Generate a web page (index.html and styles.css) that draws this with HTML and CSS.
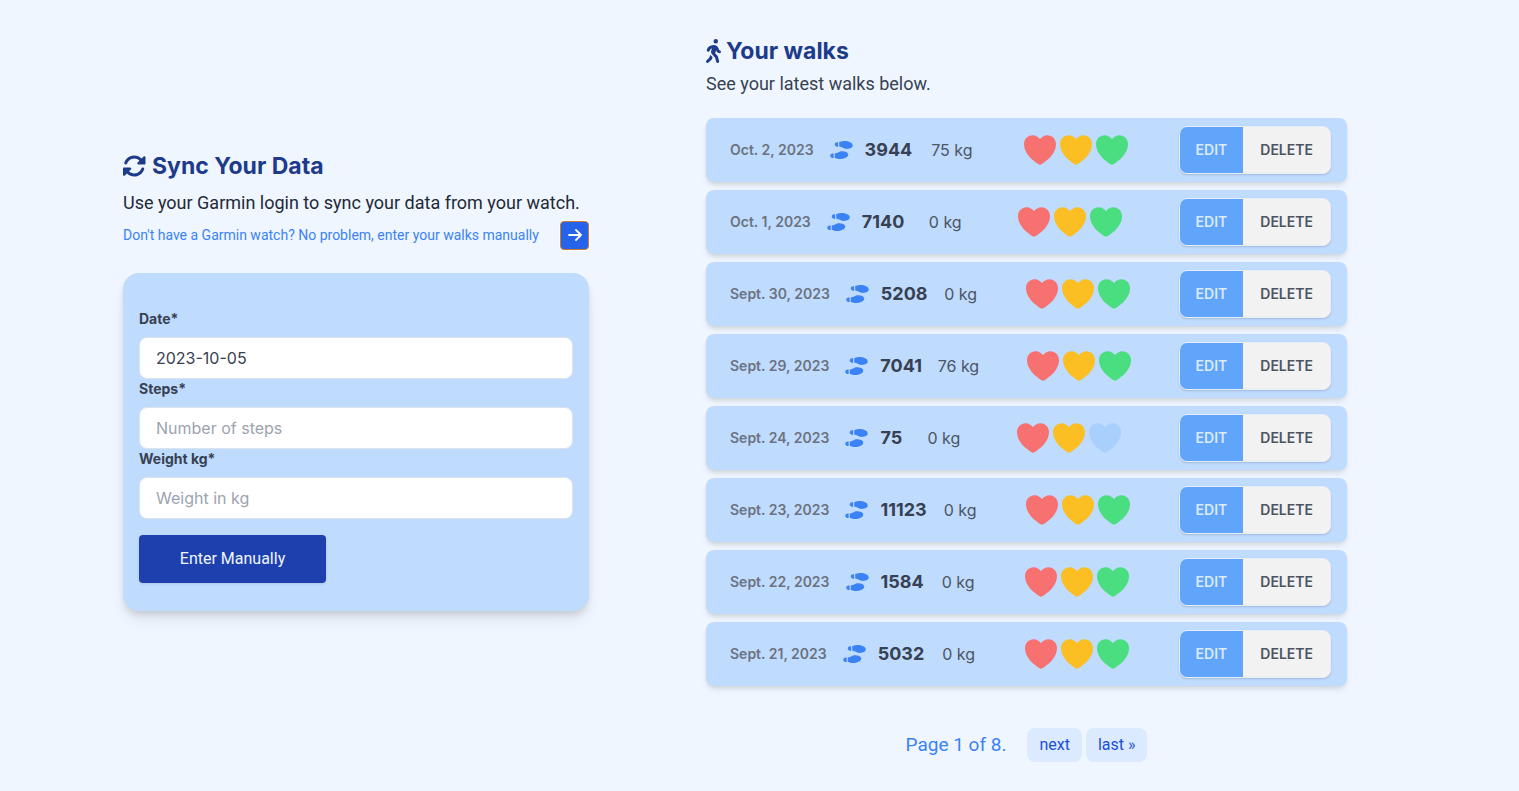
FILE: index.html
```html
<!DOCTYPE html>
<html lang="en">
<head>
<meta charset="utf-8">
<meta name="viewport" content="width=device-width, initial-scale=1">
<title>Your walks</title>
<link rel="stylesheet" href="styles.css">
</head>
<body>
<svg class="sprite" aria-hidden="true">
  <symbol id="shoes" viewBox="0 0 640 512"><path d="M416 0C352.3 0 256 32 256 32V160c48 0 76 16 104 32s56 32 104 32c56.4 0 176-16 176-96S512 0 416 0zM128 96c0 35.3 28.7 64 64 64h32V32H192c-35.3 0-64 28.7-64 64zM288 512c96 0 224-48 224-128s-119.6-96-176-96c-48 0-76 16-104 32s-56 32-104 32V480s96.3 32 160 32zM0 416c0 35.3 28.7 64 64 64H96V352H64c-35.3 0-64 28.7-64 64z"/></symbol>
  <symbol id="heart" viewBox="0 0 200 185"><path d="M100 184.606a15.384 15.384 0 0 1-8.653-2.678C53.565 156.28 37.205 138.695 28.182 127.7 8.952 104.264-.254 80.202.005 54.146.308 24.287 24.264 0 53.406 0c21.192 0 35.869 11.937 44.416 21.879a2.884 2.884 0 0 0 4.356 0C110.725 11.927 125.402 0 146.594 0c29.142 0 53.098 24.287 53.4 54.151.26 26.061-8.956 50.122-28.176 73.554-9.023 10.994-25.383 28.58-63.165 54.228a15.384 15.384 0 0 1-8.653 2.673Z"/></symbol>
</svg>
<main class="page">
  <section class="sync">
    <h1 class="title">
      <svg class="title-icon" viewBox="16 0 512 512" aria-hidden="true"><path d="M142.900 142.900c62.200-62.200 162.700-62.500 225.300-1L327 183c-6.900 6.900-8.900 17.200-5.200 26.200s12.500 14.800 22.200 14.800H472c13.300 0 24-10.700 24-24V72c0-9.700-5.800-18.500-14.800-22.200s-19.300-1.700-26.200 5.200L413.400 96.600c-87.600-86.500-228.700-86.200-315.800 1C73.200 122 55.600 150.700 44.800 181.400c-5.900 16.700 2.900 34.900 19.500 40.800s34.900-2.900 40.800-19.500c7.700-21.800 20.200-42.300 37.800-59.800zM16 312V440c0 9.700 5.800 18.500 14.800 22.200s19.300 1.700 26.200-5.200l41.600-41.600c87.600 86.500 228.700 86.200 315.800-1c24.400-24.400 42.100-53.100 52.900-83.700c5.900-16.700-2.900-34.900-19.500-40.800s-34.900 2.900-40.800 19.500c-7.700 21.800-20.200 42.300-37.800 59.800c-62.200 62.200-162.700 62.500-225.300 1L185 329c6.900-6.900 8.900-17.200 5.200-26.200s-12.500-14.800-22.200-14.800H40c-13.300 0-24 10.700-24 24z"/></svg>
      Sync Your Data
    </h1>
    <p class="lead">Use your Garmin login to sync your data from your watch.</p>
    <p class="switch">
      <span>Don't have a Garmin watch? No problem, enter your walks manually</span>
      <button class="switch-button" type="button" aria-label="Enter walks manually">
        <svg class="arrow" viewBox="0 0 14 14" aria-hidden="true"><path d="M1 7h12M8 2l5 5-5 5"/></svg>
      </button>
    </p>
    <form class="card">
      <label class="label" for="date">Date*</label>
      <input class="field" id="date" type="text" value="2023-10-05">
      <label class="label" for="steps">Steps*</label>
      <input class="field" id="steps" type="text" placeholder="Number of steps">
      <label class="label" for="weight">Weight kg*</label>
      <input class="field" id="weight" type="text" placeholder="Weight in kg">
      <button class="submit" type="submit">Enter Manually</button>
    </form>
  </section>

  <section class="walks">
    <h2 class="title">
      <svg class="title-icon walker" viewBox="0 0 320 512" aria-hidden="true"><path d="M160 48a48 48 0 1 1 96 0 48 48 0 1 1 -96 0zM126.500 199.300c-1 .4-1.900 .8-2.900 1.200l-8 3.500c-16.400 7.300-29 21.200-34.700 38.200l-2.600 7.800c-5.600 16.800-23.700 25.800-40.500 20.200s-25.800-23.700-20.200-40.500l2.600-7.800c11.400-34.100 36.600-61.900 69.400-76.500l8-3.500c20.800-9.200 43.300-14 66.100-14c44.600 0 84.800 26.800 101.900 67.900L281 232.700l21.400 10.700c15.800 7.900 22.200 27.100 14.300 42.900s-27.100 22.200-42.900 14.300L247 287.300c-10.300-5.200-18.400-13.800-22.800-24.500l-9.600-23-19.300 65.500 49.500 54c5.400 5.900 9.200 13 11.200 20.800l23 92.100c4.300 17.100-6.100 34.500-23.300 38.800s-34.500-6.100-38.800-23.300l-22-88.100-70.700-77.100c-14.800-16.100-20.300-38.600-14.700-59.700l16.900-63.500zM68.700 398l25-62.400c2.100 3 4.500 5.800 7 8.600l40.700 44.400-14.500 36.200c-2.400 6-6 11.500-10.600 16.100L54.600 502.600c-12.500 12.500-32.800 12.500-45.300 0s-12.500-32.800 0-45.300L68.700 398z"/></svg>
      Your walks
    </h2>
    <p class="intro">See your latest walks below.</p>
    <ul class="list">
      <li class="walk">
        <div class="summary"><time class="date">Oct. 2, 2023</time><svg class="shoes" aria-hidden="true"><use href="#shoes"/></svg><strong class="steps">3944</strong></div>
        <span class="weight">75 kg</span>
        <div class="hearts" role="img" aria-label="3 of 3 hearts"><svg class="heart red"><use href="#heart"/></svg><svg class="heart amber"><use href="#heart"/></svg><svg class="heart green"><use href="#heart"/></svg></div>
        <div class="actions"><button class="action edit" type="button">EDIT</button><button class="action" type="button">DELETE</button></div>
      </li>
      <li class="walk">
        <div class="summary"><time class="date">Oct. 1, 2023</time><svg class="shoes" aria-hidden="true"><use href="#shoes"/></svg><strong class="steps">7140</strong></div>
        <span class="weight">0 kg</span>
        <div class="hearts" role="img" aria-label="3 of 3 hearts"><svg class="heart red"><use href="#heart"/></svg><svg class="heart amber"><use href="#heart"/></svg><svg class="heart green"><use href="#heart"/></svg></div>
        <div class="actions"><button class="action edit" type="button">EDIT</button><button class="action" type="button">DELETE</button></div>
      </li>
      <li class="walk">
        <div class="summary"><time class="date">Sept. 30, 2023</time><svg class="shoes" aria-hidden="true"><use href="#shoes"/></svg><strong class="steps">5208</strong></div>
        <span class="weight">0 kg</span>
        <div class="hearts" role="img" aria-label="3 of 3 hearts"><svg class="heart red"><use href="#heart"/></svg><svg class="heart amber"><use href="#heart"/></svg><svg class="heart green"><use href="#heart"/></svg></div>
        <div class="actions"><button class="action edit" type="button">EDIT</button><button class="action" type="button">DELETE</button></div>
      </li>
      <li class="walk">
        <div class="summary"><time class="date">Sept. 29, 2023</time><svg class="shoes" aria-hidden="true"><use href="#shoes"/></svg><strong class="steps">7041</strong></div>
        <span class="weight">76 kg</span>
        <div class="hearts" role="img" aria-label="3 of 3 hearts"><svg class="heart red"><use href="#heart"/></svg><svg class="heart amber"><use href="#heart"/></svg><svg class="heart green"><use href="#heart"/></svg></div>
        <div class="actions"><button class="action edit" type="button">EDIT</button><button class="action" type="button">DELETE</button></div>
      </li>
      <li class="walk">
        <div class="summary"><time class="date">Sept. 24, 2023</time><svg class="shoes" aria-hidden="true"><use href="#shoes"/></svg><strong class="steps">75</strong></div>
        <span class="weight">0 kg</span>
        <div class="hearts" role="img" aria-label="2 of 3 hearts"><svg class="heart red"><use href="#heart"/></svg><svg class="heart amber"><use href="#heart"/></svg><svg class="heart empty"><use href="#heart"/></svg></div>
        <div class="actions"><button class="action edit" type="button">EDIT</button><button class="action" type="button">DELETE</button></div>
      </li>
      <li class="walk">
        <div class="summary"><time class="date">Sept. 23, 2023</time><svg class="shoes" aria-hidden="true"><use href="#shoes"/></svg><strong class="steps">11123</strong></div>
        <span class="weight">0 kg</span>
        <div class="hearts" role="img" aria-label="3 of 3 hearts"><svg class="heart red"><use href="#heart"/></svg><svg class="heart amber"><use href="#heart"/></svg><svg class="heart green"><use href="#heart"/></svg></div>
        <div class="actions"><button class="action edit" type="button">EDIT</button><button class="action" type="button">DELETE</button></div>
      </li>
      <li class="walk">
        <div class="summary"><time class="date">Sept. 22, 2023</time><svg class="shoes" aria-hidden="true"><use href="#shoes"/></svg><strong class="steps">1584</strong></div>
        <span class="weight">0 kg</span>
        <div class="hearts" role="img" aria-label="3 of 3 hearts"><svg class="heart red"><use href="#heart"/></svg><svg class="heart amber"><use href="#heart"/></svg><svg class="heart green"><use href="#heart"/></svg></div>
        <div class="actions"><button class="action edit" type="button">EDIT</button><button class="action" type="button">DELETE</button></div>
      </li>
      <li class="walk">
        <div class="summary"><time class="date">Sept. 21, 2023</time><svg class="shoes" aria-hidden="true"><use href="#shoes"/></svg><strong class="steps">5032</strong></div>
        <span class="weight">0 kg</span>
        <div class="hearts" role="img" aria-label="3 of 3 hearts"><svg class="heart red"><use href="#heart"/></svg><svg class="heart amber"><use href="#heart"/></svg><svg class="heart green"><use href="#heart"/></svg></div>
        <div class="actions"><button class="action edit" type="button">EDIT</button><button class="action" type="button">DELETE</button></div>
      </li>
    </ul>
    <nav class="pager" aria-label="Pages">
      <span class="current">Page 1 of 8.</span>
      <a class="page-link" href="#next">next</a>
      <a class="page-link" href="#last">last »</a>
    </nav>
  </section>
</main>
</body>
</html>
```
FILE: styles.css
```css
*, *::before, *::after { box-sizing: border-box; }

body {
  margin: 0;
  background: #eff6ff;
  color: #1f2937;
  font: 16px/24px Inter, "Liberation Sans", sans-serif;
}

h1, h2, p, ul { margin: 0; padding: 0; }
button, input { font: inherit; }
.sprite { display: none; }

.page {
  display: grid;
  grid-template-columns: minmax(0, 466fr) minmax(0, 641fr);
  column-gap: 117px;
  align-items: center;
  min-height: 100vh;
  padding: 35px 172px 29px 123px;
}

.lead, .intro, .switch, .submit, .pager { font-family: Roboto, Inter, sans-serif; }

.title {
  display: flex;
  align-items: center;
  gap: 5px;
  color: #1e3a8a;
  font-size: 23px;
  font-weight: 700;
  line-height: 32px;
}
.title-icon { width: 24px; height: 24px; flex: none; fill: currentColor; }
.walker { width: 15px; }

.sync { padding-bottom: 37px; }
.lead { margin-top: 7px; font-size: 18px; line-height: 28px; white-space: nowrap; }
.switch {
  display: flex;
  align-items: center;
  justify-content: space-between;
  margin-top: 4px;
  color: #3b82f6;
  font-size: 14px;
  line-height: 20px;
  white-space: nowrap;
}
.switch-button {
  display: grid;
  place-items: center;
  width: 29px;
  height: 29px;
  padding: 0;
  border: 1px solid #cf7a30;
  border-radius: 4px;
  background: #2563eb;
  box-shadow: 0 0 0 1px #fff;
}
.arrow { width: 14px; height: 14px; fill: none; stroke: #fff; stroke-width: 1.8; stroke-linecap: round; stroke-linejoin: round; }

.card {
  margin-top: 23px;
  padding: 36px 16px 28px;
  border-radius: 16px;
  background: #bfdbfe;
  box-shadow: 0 4px 6px -1px #0000001a, 0 10px 15px -3px #0000001a;
}
.label { display: block; margin-bottom: 8px; color: #374151; font-size: 14px; font-weight: 700; line-height: 20px; }
.field {
  display: block;
  width: 100%;
  height: 42px;
  padding: 8px 16px;
  border: 1px solid #dbe3ee;
  border-radius: 8px;
  background: #fff;
  color: #374151;
}
.field::placeholder { color: #9ca3af; opacity: 1; }
.submit {
  min-width: 187px;
  height: 48px;
  margin-top: 16px;
  padding: 0 32px;
  border: 0;
  border-radius: 4px;
  background: #1e40af;
  color: #eff6ff;
  box-shadow: 0 1px 3px #0000001a;
}

.intro { margin-top: 3px; color: #374151; font-size: 18px; line-height: 28px; }
.list { display: grid; gap: 8px; margin-top: 20px; list-style: none; }
.walk {
  display: flex;
  align-items: center;
  justify-content: space-between;
  height: 64px;
  padding: 0 16px 0 24px;
  border-radius: 8px;
  background: #bfdbfe;
  box-shadow: 0 4px 6px -1px #0000001a, 0 2px 4px -2px #0000001a;
  white-space: nowrap;
}
.summary { display: flex; align-items: center; }
.date { color: #6b7280; font-size: 14px; font-weight: 600; }
.shoes { width: 23px; height: 18px; margin: 0 12px 0 16px; fill: #3b82f6; }
.steps { color: #374151; font-size: 18px; font-weight: 700; }
.weight { color: #4b5563; }
.hearts { display: flex; gap: 4px; margin: 0 32px; }
.heart { width: 32px; height: 30px; }
.red { fill: #f87171; }
.amber { fill: #fbbf24; }
.green { fill: #4ade80; }
.empty { fill: #a9cffd; }
.actions {
  display: flex;
  overflow: hidden;
  height: 48px;
  border: 1px solid #e5edf7;
  border-radius: 8px;
  background: #f2f2f2;
  box-shadow: 0 1px 2px #00000026;
}
.action {
  padding: 0 17px;
  border: 0;
  background: #f2f2f2;
  color: #4b5563;
  font-size: 14px;
  font-weight: 600;
}
.edit { padding: 0 16px; background: #60a5fa; color: #dbeafe; }

.pager { display: flex; align-items: center; justify-content: center; gap: 4px; margin-top: 42px; }
.current { margin-right: 17px; color: #3b82f6; font-size: 19px; line-height: 28px; }
.page-link { padding: 5px 12px; border-radius: 8px; background: #dbeafe; color: #1d4ed8; text-decoration: none; }
```
